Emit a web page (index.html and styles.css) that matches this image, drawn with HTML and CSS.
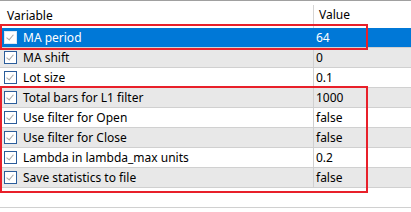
FILE: index.html
```html
<!DOCTYPE html>
<html lang="en">
<head>
    <meta charset="UTF-8">
    <title>Inputs</title>
    <link rel="stylesheet" href="styles.css">
</head>
<body>
    <div class="grid">
        <div class="head">
            <div class="col-name">Variable</div>
            <div class="col-value">Value</div>
        </div>
        <div class="row selected">
            <div class="col-name"><span class="check"></span>MA period</div>
            <div class="col-value">64</div>
        </div>
        <div class="row alt">
            <div class="col-name"><span class="check"></span>MA shift</div>
            <div class="col-value">0</div>
        </div>
        <div class="row">
            <div class="col-name"><span class="check"></span>Lot size</div>
            <div class="col-value">0.1</div>
        </div>
        <div class="row alt">
            <div class="col-name"><span class="check"></span>Total bars for L1 filter</div>
            <div class="col-value">1000</div>
        </div>
        <div class="row">
            <div class="col-name"><span class="check"></span>Use filter for Open</div>
            <div class="col-value">false</div>
        </div>
        <div class="row alt">
            <div class="col-name"><span class="check"></span>Use filter for Close</div>
            <div class="col-value">false</div>
        </div>
        <div class="row">
            <div class="col-name"><span class="check"></span>Lambda in lambda_max units</div>
            <div class="col-value">0.2</div>
        </div>
        <div class="row alt">
            <div class="col-name"><span class="check"></span>Save statistics to file</div>
            <div class="col-value">false</div>
        </div>
        <div class="row empty"></div>

        <div class="mark mark-top"></div>
        <div class="mark mark-bottom"></div>
    </div>
</body>
</html>
```

FILE: styles.css
```css
body {
    margin: 0;
    background-color: #fff;
    font-family: "Noto Sans", "Open Sans", sans-serif;
    font-size: 12px;
    color: #000;
}

.grid {
    position: relative;
    width: 411px;
    border-top: 1px solid #a0a0a0;
}

.head,
.row {
    display: grid;
    grid-template-columns: 313px 1fr;
}

.head {
    height: 27px;
    align-items: end;
}

.head .col-name {
    padding: 0 0 4px 7px;
}

.head .col-value {
    height: 23px;
    border-left: 1px solid #d5d5d5;
    padding-left: 5px;
    line-height: 19px;
}

.row {
    height: 19px;
    border-bottom: 1px solid #d0d0d0;
    line-height: 19px;
}

.row.alt {
    background-color: #e8e8e8;
}

.row.selected {
    background-color: #0078d7;
    color: #fff;
}

.row .col-name {
    display: flex;
    align-items: center;
    padding-left: 4px;
}

.row .col-value {
    border-left: 1px solid #d0d0d0;
    padding-left: 2px;
}

.row.selected .col-value {
    border-left-color: #0078d7;
}

.row.empty {
    display: block;
    background-color: #fff;
}

.check {
    position: relative;
    width: 11px;
    height: 11px;
    margin-right: 6px;
    border: 1px solid #2b5d9b;
    background-color: #fff;
}

.row.selected .check {
    border-color: #dde7f3;
}

.check::after {
    content: "";
    position: absolute;
    left: 3px;
    top: 1px;
    width: 3px;
    height: 6px;
    border: solid #a8a8a8;
    border-width: 0 1px 1px 0;
    transform: rotate(40deg);
}

.mark {
    position: absolute;
    left: 0;
    width: 364px;
    border: 2px solid #e8202a;
}

.mark-top {
    top: 23px;
    height: 22px;
}

.mark-bottom {
    top: 85px;
    height: 103px;
}
```
